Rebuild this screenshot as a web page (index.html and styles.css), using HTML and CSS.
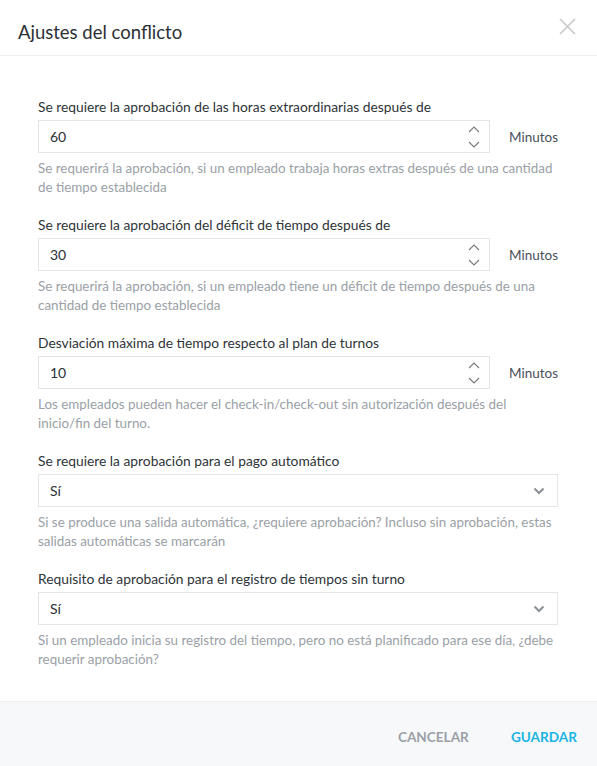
FILE: index.html
```html
<!DOCTYPE html>
<html>
    <head>
        <link rel="stylesheet" href="styles.css">
    </head>
    <body>
    <div class="modal">
        <div class="header">
            <h1 class="title">Ajustes del conflicto</h1>
            <button class="close" aria-label="Cerrar">
                <svg width="17" height="17" viewBox="0 0 17 17"><path d="M1 1L16 16M16 1L1 16" stroke="#c8c8c8" stroke-width="1.6" fill="none"/></svg>
            </button>
        </div>
        <div class="content">
            <div class="field">
                <label class="label">Se requiere la aprobación de las horas extraordinarias después de</label>
                <div class="row">
                    <div class="number">
                        <span>60</span>
                        <span class="spin">
                            <svg width="12" height="7" viewBox="0 0 12 7"><path d="M1 6L6 1L11 6" stroke="#777" stroke-width="1.1" fill="none"/></svg>
                            <svg width="12" height="7" viewBox="0 0 12 7"><path d="M1 1L6 6L11 1" stroke="#777" stroke-width="1.1" fill="none"/></svg>
                        </span>
                    </div>
                    <span class="unit">Minutos</span>
                </div>
                <p class="help">Se requerirá la aprobación, si un empleado trabaja horas extras después de una cantidad de tiempo establecida</p>
            </div>
            <div class="field">
                <label class="label">Se requiere la aprobación del déficit de tiempo después de</label>
                <div class="row">
                    <div class="number">
                        <span>30</span>
                        <span class="spin">
                            <svg width="12" height="7" viewBox="0 0 12 7"><path d="M1 6L6 1L11 6" stroke="#777" stroke-width="1.1" fill="none"/></svg>
                            <svg width="12" height="7" viewBox="0 0 12 7"><path d="M1 1L6 6L11 1" stroke="#777" stroke-width="1.1" fill="none"/></svg>
                        </span>
                    </div>
                    <span class="unit">Minutos</span>
                </div>
                <p class="help">Se requerirá la aprobación, si un empleado tiene un déficit de tiempo después de una cantidad de tiempo establecida</p>
            </div>
            <div class="field">
                <label class="label">Desviación máxima de tiempo respecto al plan de turnos</label>
                <div class="row">
                    <div class="number">
                        <span>10</span>
                        <span class="spin">
                            <svg width="12" height="7" viewBox="0 0 12 7"><path d="M1 6L6 1L11 6" stroke="#777" stroke-width="1.1" fill="none"/></svg>
                            <svg width="12" height="7" viewBox="0 0 12 7"><path d="M1 1L6 6L11 1" stroke="#777" stroke-width="1.1" fill="none"/></svg>
                        </span>
                    </div>
                    <span class="unit">Minutos</span>
                </div>
                <p class="help">Los empleados pueden hacer el check-in/check-out sin autorización después del inicio/fin del turno.</p>
            </div>
            <div class="field">
                <label class="label">Se requiere la aprobación para el pago automático</label>
                <div class="select">
                    <span>Sí</span>
                    <svg width="12" height="8" viewBox="0 0 12 8"><path d="M1.5 1.5L6 6L10.5 1.5" stroke="#8a8f96" stroke-width="2" fill="none"/></svg>
                </div>
                <p class="help">Si se produce una salida automática, ¿requiere aprobación? Incluso sin aprobación, estas salidas automáticas se marcarán</p>
            </div>
            <div class="field">
                <label class="label">Requisito de aprobación para el registro de tiempos sin turno</label>
                <div class="select">
                    <span>Sí</span>
                    <svg width="12" height="8" viewBox="0 0 12 8"><path d="M1.5 1.5L6 6L10.5 1.5" stroke="#8a8f96" stroke-width="2" fill="none"/></svg>
                </div>
                <p class="help">Si un empleado inicia su registro del tiempo, pero no está planificado para ese día, ¿debe requerir aprobación?</p>
            </div>
        </div>
        <div class="footer">
            <button class="btn cancel">CANCELAR</button>
            <button class="btn save">GUARDAR</button>
        </div>
    </div>
    </body>
</html>
```

FILE: styles.css
```css
body {
    margin: 0;
    font-family: Lato, "Open Sans", sans-serif;
    color: #333;
    background: #fff;
}
.modal {
    width: 597px;
    height: 766px;
    display: flex;
    flex-direction: column;
}
.header {
    height: 56px;
    border-bottom: 1px solid #eceef0;
    display: flex;
    align-items: flex-start;
    justify-content: space-between;
    padding: 0 21px 0 18px;
    box-sizing: border-box;
}
.title {
    margin: 21px 0 0;
    font-size: 18.5px;
    line-height: 22px;
    font-weight: 400;
    color: #2b3036;
}
.close {
    border: none;
    background: none;
    padding: 0;
    margin-top: 18px;
    display: flex;
}
.content {
    flex: 1;
    padding: 42px 39px 0 38px;
}
.field {
    margin-bottom: 19px;
}
.label {
    display: block;
    font-size: 13.8px;
    line-height: 18px;
    color: #2e3338;
    margin-bottom: 4px;
}
.row {
    display: flex;
    align-items: center;
}
.number, .select {
    height: 33px;
    box-sizing: border-box;
    border: 1px solid #e3e5e8;
    display: flex;
    align-items: center;
    justify-content: space-between;
    padding: 0 10px 0 11px;
    font-size: 14px;
    color: #2b3036;
}
.number {
    width: 456px;
    padding-right: 9px;
}
.spin {
    display: flex;
    flex-direction: column;
    gap: 8px;
}
.spin svg {
    display: block;
}
.unit {
    margin-left: 19px;
    font-size: 13.5px;
    color: #4a5058;
}
.select {
    padding-right: 12px;
}
.help {
    margin: 6px 0 0;
    font-size: 13.4px;
    line-height: 19px;
    color: #9aa0a6;
}
.footer {
    height: 59px;
    background: #f7f8fa;
    border-top: 1px solid #eef0f2;
    display: flex;
    justify-content: flex-end;
    align-items: center;
    gap: 42px;
    padding: 5px 20px 0 0;
}
.btn {
    border: none;
    background: none;
    padding: 0;
    font-family: inherit;
    font-size: 13.6px;
    font-weight: 700;
}
.cancel {
    color: #9aa0a6;
}
.save {
    color: #1ab4e4;
}
```
